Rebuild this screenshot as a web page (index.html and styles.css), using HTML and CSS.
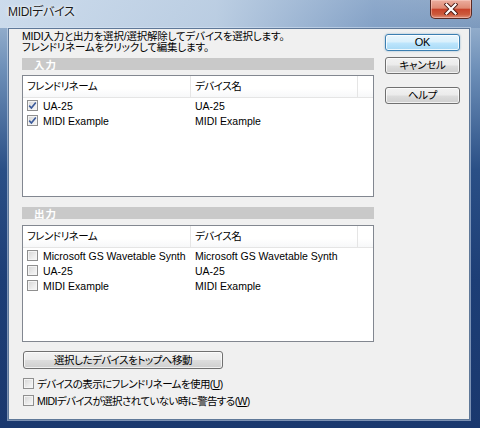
FILE: index.html
```html
<!DOCTYPE html>
<html lang="ja">
<head>
<meta charset="utf-8">
<title>MIDIデバイス</title>
<link rel="stylesheet" href="styles.css">
</head>
<body>
<div class="window">
  <div class="titlebar">
    <span class="title">MIDIデバイス</span>
    <div class="close">
      <svg width="14" height="12" viewBox="0 0 14 12"><path d="M2.5 1.5 L11.5 10.5 M11.5 1.5 L2.5 10.5" stroke="#4a1a14" stroke-width="4" stroke-linecap="square"/><path d="M2.5 1.5 L11.5 10.5 M11.5 1.5 L2.5 10.5" stroke="#ffffff" stroke-width="2.2" stroke-linecap="square"/></svg>
    </div>
  </div>
  <div class="client">
    <div class="main">
      <p class="intro">MIDI入力と出力を選択/選択解除してデバイスを選択します。<br>フレンドリネームをクリックして編集します。</p>
      <div class="section"><span>入力</span></div>
      <div class="listview lv-in">
        <div class="lv-head">
          <div class="c1">フレンドリネーム</div>
          <div class="c2">デバイス名</div>
          <div class="c3"></div>
        </div>
        <div class="lv-row">
          <div class="c1"><span class="cb"><svg width="9" height="9" viewBox="0 0 9 9"><path d="M1.2 4.6 L3.4 7 L7.8 1.4" fill="none" stroke="#3b5a9a" stroke-width="1.6"/></svg></span><span>UA-25</span></div>
          <div class="c2">UA-25</div>
        </div>
        <div class="lv-row">
          <div class="c1"><span class="cb"><svg width="9" height="9" viewBox="0 0 9 9"><path d="M1.2 4.6 L3.4 7 L7.8 1.4" fill="none" stroke="#3b5a9a" stroke-width="1.6"/></svg></span><span>MIDI Example</span></div>
          <div class="c2">MIDI Example</div>
        </div>
      </div>
      <div class="section section-out"><span>出力</span></div>
      <div class="listview lv-out">
        <div class="lv-head">
          <div class="c1">フレンドリネーム</div>
          <div class="c2">デバイス名</div>
          <div class="c3"></div>
        </div>
        <div class="lv-row">
          <div class="c1"><span class="cb"></span><span>Microsoft GS Wavetable Synth</span></div>
          <div class="c2">Microsoft GS Wavetable Synth</div>
        </div>
        <div class="lv-row">
          <div class="c1"><span class="cb"></span><span>UA-25</span></div>
          <div class="c2">UA-25</div>
        </div>
        <div class="lv-row">
          <div class="c1"><span class="cb"></span><span>MIDI Example</span></div>
          <div class="c2">MIDI Example</div>
        </div>
      </div>
      <div class="btn btn-move">選択したデバイスをトップへ移動</div>
      <label class="check check-1"><span class="cb"></span><span>デバイスの表示にフレンドリネームを使用(<u>U</u>)</span></label>
      <label class="check check-2"><span class="cb"></span><span>MIDIデバイスが選択されていない時に警告する(<u>W</u>)</span></label>
    </div>
    <div class="side">
      <div class="btn btn-default">OK</div>
      <div class="btn btn-cancel">キャンセル</div>
      <div class="btn btn-help">ヘルプ</div>
    </div>
  </div>
</div>
</body>
</html>
```
FILE: styles.css
```css
* { box-sizing: border-box; }
html, body { margin: 0; padding: 0; }
body {
  width: 480px;
  height: 428px;
  overflow: hidden;
  font-family: "Liberation Sans", "Noto Sans CJK JP", sans-serif;
  font-size: 10.5px;
  font-feature-settings: "palt" 1;
  color: #000;
}
.window {
  width: 480px;
  height: 428px;
  padding: 0 10px 8px 8px;
  display: flex;
  flex-direction: column;
  background:
    linear-gradient(to right, rgba(206,221,237,0.95) 0%, rgba(190,208,228,0.9) 45%, rgba(120,152,194,0.55) 78%, rgba(40,80,135,0.2) 100%) 0 0 / 100% 28px no-repeat,
    linear-gradient(to bottom, #a9bfd7 0px, #6d8fb8 70px, #2a4f86 170px, #1d3e76 280px, #1a386e 100%);
}
.titlebar {
  height: 28px;
  flex: none;
  display: flex;
  justify-content: space-between;
  align-items: flex-start;
}
.title {
  margin-top: 4px;
  font-size: 12px;
  line-height: 16px;
  letter-spacing: -0.3px;
  color: #1a1a1a;
  text-shadow: 0 0 5px rgba(255,255,255,0.9), 0 0 2px rgba(255,255,255,0.9);
}
.close {
  width: 42px;
  height: 19px;
  margin-right: -2px;
  border: 1px solid #5a2a24;
  border-top: none;
  border-radius: 0 0 5px 5px;
  background: linear-gradient(to bottom, #ecae9f 0%, #df8a74 45%, #c8432a 52%, #cc5a3c 80%, #e0907a 100%);
  box-shadow: inset 0 0 0 1px rgba(255,220,210,0.45);
  display: flex;
  align-items: center;
  justify-content: center;
}
.client {
  flex: 1;
  border: 1px solid #5f7898;
  background: #f0f0f0;
  display: flex;
  box-shadow: 0 0 0 1px rgba(220,232,245,0.5);
}
.main {
  width: 352px;
  margin-left: 13px;
  padding-top: 2px;
  display: flex;
  flex-direction: column;
}
.intro {
  margin: 0;
  line-height: 11px;
  font-size: 10.5px;
  letter-spacing: -0.2px;
  white-space: nowrap;
}
.section {
  margin-top: 5px;
  height: 12px;
  background: #c9c9c9;
  color: #fff;
  font-weight: bold;
  font-size: 10.5px;
  padding-left: 12px;
  letter-spacing: 1px;
  display: flex;
  align-items: center;
}
.section span {
  font-family: "Noto Sans CJK JP", sans-serif;
  line-height: 12px;
  display: block;
  margin-top: 1px;
}
.section-out { margin-top: 10px; }
.listview {
  margin-top: 5px;
  height: 122px;
  border: 1px solid #828790;
  background: #fff;
}
.lv-out { margin-top: 6px; height: 117px; }
.lv-head {
  height: 22px;
  display: flex;
  border-bottom: 1px solid #e5e5e5;
  background: linear-gradient(to bottom, #ffffff 0%, #ffffff 60%, #f7f8f9 100%);
}
.lv-head > div {
  line-height: 21px;
  padding-left: 4px;
  border-right: 1px solid #e5e5e5;
  white-space: nowrap;
  letter-spacing: -0.5px;
}
.lv-head .c3 { flex: 1; border-right: none; }
.c1 { width: 168px; flex: none; }
.c2 { width: 167px; flex: none; }
.lv-row {
  height: 15px;
  display: flex;
  align-items: center;
  font-size: 10.5px;
  white-space: nowrap;
}
.lv-row .c1 {
  display: flex;
  align-items: center;
  padding-left: 4px;
}
.lv-row .c2 { padding-left: 4px; }
.cb {
  width: 11px;
  height: 11px;
  flex: none;
  border: 1px solid #8f8f8f;
  background: linear-gradient(135deg, #d4d4d4 0%, #ececec 60%, #f8f8f8 100%);
  box-shadow: inset 0 0 0 1px #f4f4f4;
  display: flex;
  align-items: center;
  justify-content: center;
}
.lv-row .cb { margin-right: 5px; }
.btn {
  height: 17px;
  border: 1px solid #707070;
  border-radius: 3px;
  background: linear-gradient(to bottom, #f2f2f2 0%, #ebebeb 48%, #dddddd 52%, #cfcfcf 100%);
  box-shadow: inset 0 0 0 1px rgba(255,255,255,0.7);
  display: flex;
  align-items: center;
  justify-content: center;
  font-size: 10.5px;
  line-height: 15px;
  letter-spacing: -0.3px;
  white-space: nowrap;
}
.btn-move {
  margin-top: 9px;
  width: 200px;
  height: 18px;
  margin-left: 1px;
  letter-spacing: -0.5px;
}
.check {
  display: flex;
  align-items: center;
  height: 14px;
  margin-left: 1px;
  white-space: nowrap;
  font-size: 10.5px;
  letter-spacing: -0.6px;
}
.check .cb { margin-right: 3px; }
.check-1 { margin-top: 7px; }
.check-2 { margin-top: 3px; }
.side {
  margin-left: 11px;
  width: 75px;
  padding-top: 5px;
  display: flex;
  flex-direction: column;
}
.btn-default {
  font-size: 11px;
  border-color: #3c7fb1;
  background: linear-gradient(to bottom, #eaf6fd 0%, #d9f0fc 48%, #bee6fd 52%, #a7d9f5 100%);
  box-shadow: inset 0 0 0 1px rgba(255,255,255,0.8), 0 0 2px rgba(60,127,177,0.6);
}
.btn-cancel { margin-top: 6px; }
.btn-help { margin-top: 13px; }
```
